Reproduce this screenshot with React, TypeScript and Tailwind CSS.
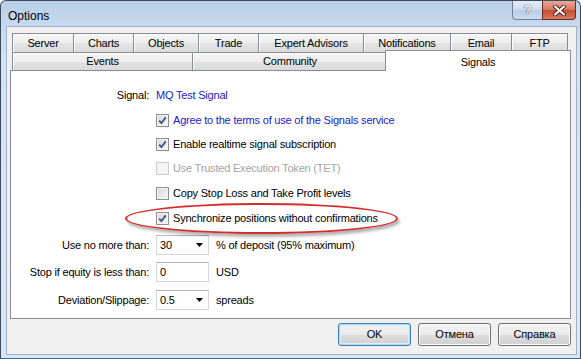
import React from 'react';

const topTabs = [
  { label: 'Server', w: 'w-[62px]' },
  { label: 'Charts', w: 'w-[61px]' },
  { label: 'Objects', w: 'w-[66px]' },
  { label: 'Trade', w: 'w-[61px]' },
  { label: 'Expert Advisors', w: 'w-[106px]' },
  { label: 'Notifications', w: 'w-[88px]' },
  { label: 'Email', w: 'w-[62px]' },
  { label: 'FTP', w: 'w-[57px]' },
];

const tabLook =
  'flex items-center justify-center border-t border-l border-r border-[#898c95] bg-[linear-gradient(to_bottom,#f5f5f5,#ededed_50%,#e3e3e3_50%,#dadada)] shadow-[inset_1px_1px_0_#fdfdfd]';

const CheckBox = ({ checked, disabled }: { checked?: boolean; disabled?: boolean }) => (
  <span
    className={
      disabled
        ? 'w-[13px] h-[13px] shrink-0 border border-[#cbcbcb] bg-[#f4f4f4]'
        : 'w-[13px] h-[13px] shrink-0 border border-[#8e8f8f] bg-[linear-gradient(135deg,#d2d6dc,#f7f7f7)] shadow-[inset_0_0_0_1px_#f3f3f3]'
    }
  >
    {checked && (
      <svg width="11" height="11" viewBox="0 0 11 11">
        <path d="M2.2 5.6 L4.4 8 L8.8 2.4" fill="none" stroke="#3f5486" strokeWidth="1.8" />
      </svg>
    )}
  </span>
);

const CheckRow = ({ label, checked, disabled, blue, h }: { label: string; checked?: boolean; disabled?: boolean; blue?: boolean; h: string }) => (
  <div className={`flex items-center pl-[145px] ${h}`}>
    <CheckBox checked={checked} disabled={disabled} />
    <span className={`ml-[4px] ${disabled ? 'text-[#a3a3a3]' : blue ? 'text-[#2121c8]' : 'text-black'}`}>{label}</span>
  </div>
);

const Field = ({ value, combo }: { value: string; combo?: boolean }) => (
  <div className="ml-[7px] w-[53px] h-[20px] flex items-center border border-[#d5d6da] border-t-[#b3b5ba] bg-white pl-[3px] pr-[5px]">
    <span className="flex-1">{value}</span>
    {combo && (
      <svg width="7" height="4" viewBox="0 0 7 4">
        <path d="M0 0 H7 L3.5 4 Z" fill="#000" />
      </svg>
    )}
  </div>
);

const DlgButton = ({ label, primary }: { label: string; primary?: boolean }) => (
  <button
    className={`w-[73px] h-[23px] rounded-[3px] border bg-[linear-gradient(to_bottom,#f3f3f3,#ebebeb_50%,#dddddd_50%,#d0d0d0)] ${
      primary ? 'border-[#3c7fb1] shadow-[inset_0_0_0_1px_#a9dcf6,inset_0_0_0_2px_#d6effb]' : 'border-[#707070] shadow-[inset_0_0_0_1px_#fafafa]'
    }`}
  >
    {label}
  </button>
);

export default function App() {
  return (
    <div className="w-[581px] h-[359px] flex flex-col border border-[#3b4a5c] border-b-[#2c6da3] rounded-t-[6px] bg-[linear-gradient(to_bottom,#bad0e9,#d4e3f3_15%,#d9e7f5)] pl-[5px] pr-[3px] pb-[3px] font-['Liberation_Sans',Arial,sans-serif] text-[11px] tracking-[-0.2px] text-black">
      <div className="h-[25px] shrink-0 flex items-start">
        <span className="ml-[2px] mt-[6px] text-[12px] tracking-normal">Options</span>
        <div className="ml-auto flex mr-[1px]">
          <div className="w-[31px] h-[19px] flex items-center justify-center rounded-bl-[4px] border border-t-0 border-[#6e7f96] bg-[linear-gradient(to_bottom,#e5edf7,#ccdbec_50%,#b8cce3_50%,#cbdcf0)] text-[13px] font-bold text-white [text-shadow:0_0_1px_#2d3a4c,0_0_1px_#2d3a4c]">
            ?
          </div>
          <div className="w-[34px] h-[19px] -ml-px flex items-center justify-center rounded-br-[4px] border border-t-0 border-[#6b2b22] bg-[linear-gradient(to_bottom,#e9a797,#d7765f_50%,#c64a31_50%,#d77a5e)]">
            <svg width="13" height="11" viewBox="0 0 13 11">
              <path d="M2 1.5 L11 9.5 M11 1.5 L2 9.5" stroke="#4a1b14" strokeWidth="4" strokeLinecap="round" />
              <path d="M2 1.5 L11 9.5 M11 1.5 L2 9.5" stroke="#ffffff" strokeWidth="2.2" strokeLinecap="round" />
            </svg>
          </div>
        </div>
      </div>

      <div className="flex-1 flex flex-col border border-[#9fb1c6] bg-[#f0f0f0] pt-[6px]">
        <div className="ml-[3px] w-[561px] flex flex-col">
          <div className="h-[19px] flex items-start pl-[2px]">
            {topTabs.map((t, i) => (
              <div key={t.label} className={`${tabLook} ${t.w} h-[20px] ${i > 0 ? '-ml-px' : ''}`}>
                {t.label}
              </div>
            ))}
          </div>
          <div className="h-[18px] flex items-start pl-[2px]">
            <div className={`${tabLook} w-[181px] h-[18px]`}>Events</div>
            <div className={`${tabLook} w-[196px] h-[18px] -ml-px`}>Community</div>
            <div className="relative z-10 w-[186px] h-[21px] -mt-[2px] -ml-[3px] flex items-start justify-center pt-[3px] border-t border-l border-r border-[#898c95] bg-white">
              Signals
            </div>
          </div>

          <div className="relative h-[249px] border border-[#898c95] bg-white pt-[12px]">
            <div className="flex items-center h-[25px]">
              <span className="w-[138px] text-right">Signal:</span>
              <span className="ml-[7px] text-[#2121c8]">MQ Test Signal</span>
            </div>
            <CheckRow h="h-[24px]" checked blue label="Agree to the terms of use of the Signals service" />
            <CheckRow h="h-[24px]" checked label="Enable realtime signal subscription" />
            <CheckRow h="h-[25px]" disabled label="Use Trusted Execution Token (TET)" />
            <CheckRow h="h-[25px]" label="Copy Stop Loss and Take Profit levels" />
            <CheckRow h="h-[24px]" checked label="Synchronize positions without confirmations" />

            <div className="flex items-center h-[20px] mt-[5px]">
              <span className="w-[138px] text-right">Use no more than:</span>
              <Field value="30" combo />
              <span className="ml-[7px]">% of deposit (95% maximum)</span>
            </div>
            <div className="flex items-center h-[20px] mt-[7px]">
              <span className="w-[138px] text-right">Stop if equity is less than:</span>
              <Field value="0" />
              <span className="ml-[7px]">USD</span>
            </div>
            <div className="flex items-center h-[20px] mt-[8px]">
              <span className="w-[138px] text-right">Deviation/Slippage:</span>
              <Field value="0.5" combo />
              <span className="ml-[7px]">spreads</span>
            </div>

            <div className="absolute left-[114px] top-[132px] w-[273px] h-[31px] rounded-[50%] border-2 border-[#d62b2b] shadow-[2px_3px_3px_rgba(0,0,0,0.3)]" />
          </div>
        </div>

        <div className="flex justify-end gap-[7px] pr-[5px] mt-[4px]">
          <DlgButton label="OK" primary />
          <DlgButton label="Отмена" />
          <DlgButton label="Справка" />
        </div>
      </div>
    </div>
  );
}
